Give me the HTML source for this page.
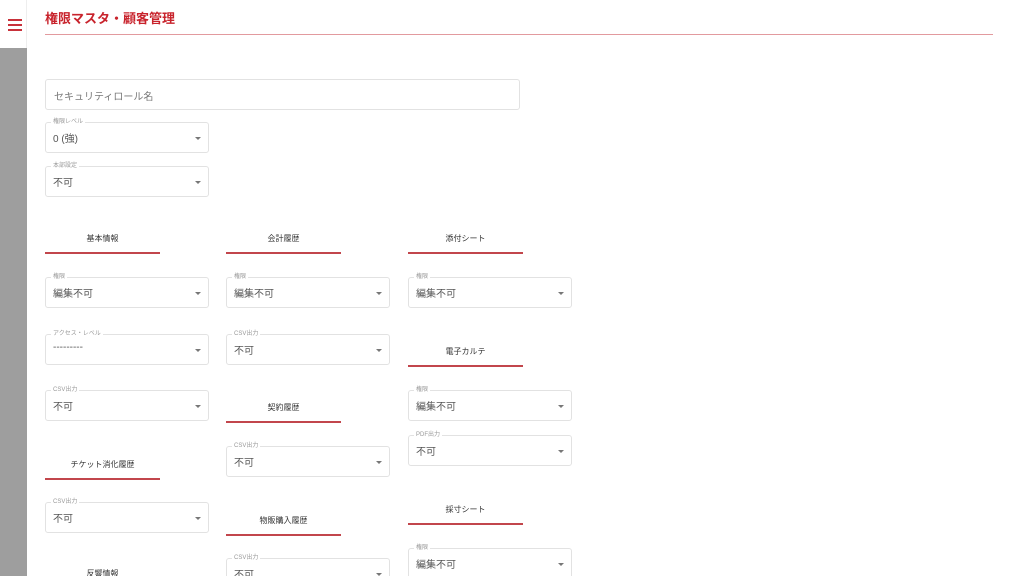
<!DOCTYPE html>
<html><head><meta charset="utf-8"><style>
*{box-sizing:border-box;margin:0;padding:0}
html,body{width:1024px;height:576px;overflow:hidden}
body{background:#fff;font-family:"Liberation Sans","Noto Sans CJK JP",sans-serif;position:relative;color:#333}
.side{position:absolute;left:0;top:0;width:27px;height:576px;border-right:1px solid #eee}
.side .g{position:absolute;left:0;top:48px;width:27px;height:528px;background:#9e9e9e}
.ham{position:absolute;left:8px;top:19px;width:14px}
.ham i{display:block;height:2px;background:#c8313a;margin-bottom:3px}
.title{position:absolute;left:45px;top:8px;font-size:13px;font-weight:bold;color:#c8232c}
.hr{position:absolute;left:45px;top:34px;width:948px;height:1px;background:#e29a9e}
.tf{position:absolute;left:45px;top:79px;width:475px;height:31px;border:1px solid #e2e2e2;border-radius:3px;font-size:10px;color:#777;padding:8px 8px}
.f{position:absolute;width:164px;height:31px;border:1px solid #e2e2e2;border-radius:3px}
.f .l{position:absolute;left:5px;top:-5px;font-size:6px;color:#999;background:#fff;padding:0 2px;line-height:8px}
.f .v{position:absolute;left:7px;top:7px;font-size:10px;color:#555}
.f .a{position:absolute;right:7px;top:14px;border-left:3px solid transparent;border-right:3px solid transparent;border-top:3px solid #777}
.t{position:absolute;width:115px;font-size:8px;text-align:center;color:#333}
.t i{position:absolute;left:0;width:115px;height:2px;background:#c2464c;top:19px}
</style></head><body>
<div class="side"><div class="ham"><i></i><i></i><i></i></div><div class="g"></div></div>
<div class="title">権限マスタ・顧客管理</div>
<div class="hr"></div>
<div class="tf">セキュリティロール名</div>

<div class="f" style="left:45px;top:122px"><span class="l">権限レベル</span><span class="v">0 (強)</span><span class="a"></span></div>
<div class="f" style="left:45px;top:166px"><span class="l">本部設定</span><span class="v">不可</span><span class="a"></span></div>

<div class="t" style="left:45px;top:233px">基本情報<i></i></div>
<div class="f" style="left:45px;top:277px"><span class="l">権限</span><span class="v">編集不可</span><span class="a"></span></div>
<div class="f" style="left:45px;top:334px"><span class="l">アクセス・レベル</span><span class="v">---------</span><span class="a"></span></div>
<div class="f" style="left:45px;top:390px"><span class="l">CSV出力</span><span class="v">不可</span><span class="a"></span></div>
<div class="t" style="left:45px;top:459px">チケット消化履歴<i></i></div>
<div class="f" style="left:45px;top:502px"><span class="l">CSV出力</span><span class="v">不可</span><span class="a"></span></div>
<div class="t" style="left:45px;top:568px">反響情報<i></i></div>

<div class="t" style="left:226px;top:233px">会計履歴<i></i></div>
<div class="f" style="left:226px;top:277px"><span class="l">権限</span><span class="v">編集不可</span><span class="a"></span></div>
<div class="f" style="left:226px;top:334px"><span class="l">CSV出力</span><span class="v">不可</span><span class="a"></span></div>
<div class="t" style="left:226px;top:402px">契約履歴<i></i></div>
<div class="f" style="left:226px;top:446px"><span class="l">CSV出力</span><span class="v">不可</span><span class="a"></span></div>
<div class="t" style="left:226px;top:515px">物販購入履歴<i></i></div>
<div class="f" style="left:226px;top:558px"><span class="l">CSV出力</span><span class="v">不可</span><span class="a"></span></div>

<div class="t" style="left:408px;top:233px">添付シート<i></i></div>
<div class="f" style="left:408px;top:277px"><span class="l">権限</span><span class="v">編集不可</span><span class="a"></span></div>
<div class="t" style="left:408px;top:346px">電子カルテ<i></i></div>
<div class="f" style="left:408px;top:390px"><span class="l">権限</span><span class="v">編集不可</span><span class="a"></span></div>
<div class="f" style="left:408px;top:435px"><span class="l">PDF出力</span><span class="v">不可</span><span class="a"></span></div>
<div class="t" style="left:408px;top:504px">採寸シート<i></i></div>
<div class="f" style="left:408px;top:548px"><span class="l">権限</span><span class="v">編集不可</span><span class="a"></span></div>
</body></html>
